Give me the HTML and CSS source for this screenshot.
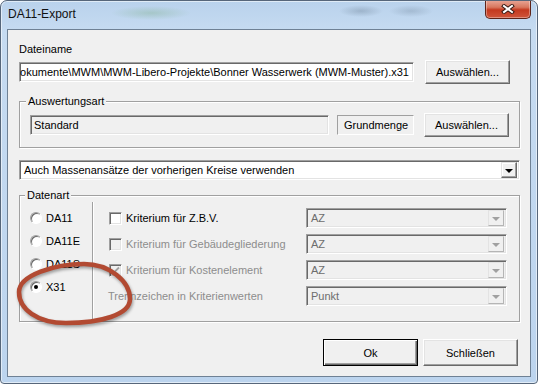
FILE: index.html
```html
<!DOCTYPE html>
<html lang="de">
<head>
  <meta charset="UTF-8">
  <title>DA11-Export</title>
  <link rel="stylesheet" href="styles.css">
</head>
<body>
  <div class="window">
    <div class="titlebar">
      <span class="title">DA11-Export</span>
      <button class="close-btn" title="Schließen">
        <svg width="14" height="10" viewBox="0 0 14 10">
          <path d="M3 2 L11 8 M11 2 L3 8" stroke="#3b1c16" stroke-width="4" stroke-linecap="square"/>
          <path d="M3 2 L11 8 M11 2 L3 8" stroke="#fff" stroke-width="2" stroke-linecap="square"/>
        </svg>
      </button>
    </div>
    <div class="client">
      <div class="label">Dateiname</div>
      <div class="file-row">
        <div class="field white path"><span>Dokumente\MWM\MWM-Libero-Projekte\Bonner Wasserwerk (MWM-Muster).x31</span></div>
        <button class="btn">Auswählen...</button>
      </div>

      <div class="group eval">
        <div class="legend">Auswertungsart</div>
        <div class="eval-row">
          <div class="field standard">Standard</div>
          <div class="field grund">Grundmenge</div>
          <button class="btn">Auswählen...</button>
        </div>
      </div>

      <div class="combo main-combo">
        <span class="combo-text">Auch Massenansätze der vorherigen Kreise verwenden</span>
        <span class="arrow"><i></i></span>
      </div>

      <div class="group datenart">
        <div class="legend">Datenart</div>
        <div class="datenart-body">
          <div class="radios">
            <label class="radio"><span class="dot"></span>DA11</label>
            <label class="radio"><span class="dot"></span>DA11E</label>
            <label class="radio"><span class="dot"></span>DA11S</label>
            <label class="radio"><span class="dot on"></span>X31</label>
          </div>
          <div class="criteria">
            <div class="crit">
              <span class="check"></span><span>Kriterium für Z.B.V.</span>
            </div>
            <div class="combo disabled"><span class="combo-text">AZ</span><span class="arrow"><i></i></span></div>

            <div class="crit off">
              <span class="check"></span><span>Kriterium für Gebäudegliederung</span>
            </div>
            <div class="combo disabled"><span class="combo-text">AZ</span><span class="arrow"><i></i></span></div>

            <div class="crit off">
              <span class="check checked">
                <svg width="9" height="9" viewBox="0 0 9 9"><path d="M1 4 L3 6.5 L8 1.5" stroke="#a0a0a0" stroke-width="1.8" fill="none"/></svg>
              </span><span>Kriterium für Kostenelement</span>
            </div>
            <div class="combo disabled"><span class="combo-text">AZ</span><span class="arrow"><i></i></span></div>

            <div class="crit off plain">
              <span>Trennzeichen in Kriterienwerten</span>
            </div>
            <div class="combo disabled"><span class="combo-text">Punkt</span><span class="arrow"><i></i></span></div>
          </div>
        </div>
      </div>

      <div class="actions">
        <button class="btn big default">Ok</button>
        <button class="btn big">Schließen</button>
      </div>

      <!-- rote Markierung um X31 -->
      <svg class="mark" width="200" height="320" viewBox="0 0 200 320">
        <path d="M11 262 C11 245 47 234 76 234 C101 234 122 251 122 269 C122 285 92 293 58 293 C29 293 11 279 11 262 Z"
              fill="none" stroke="#b24a32" stroke-width="4.5"/>
      </svg>
    </div>
  </div>
</body>
</html>
```

FILE: styles.css
```css
* { box-sizing: border-box; }
body { margin: 0; background: #fff; font-family: "Liberation Sans", Arial, sans-serif; font-size: 11px; color: #000; }
button { font-family: inherit; font-size: 11px; color: #000; padding: 0; cursor: default; }

/* Fensterrahmen (Aero) */
.window { width: 538px; height: 384px; display: flex; flex-direction: column; border: 1px solid #56667a; border-radius: 7px 7px 4px 4px; overflow: hidden;
  background:
    radial-gradient(ellipse 40px 7px at 150px 12px, rgba(120, 170, 130, .35), transparent),
    radial-gradient(ellipse 22px 6px at 360px 10px, rgba(60, 80, 100, .25), transparent),
    radial-gradient(ellipse 22px 6px at 410px 10px, rgba(60, 80, 100, .2), transparent),
    linear-gradient(to bottom, #b9d2ec 0, #c6dbf1 30px, #bcd4ee 100%);
  box-shadow: inset 0 0 0 1px rgba(255, 255, 255, .55); }
.titlebar { height: 28px; display: flex; justify-content: space-between; align-items: flex-start; padding: 0 6px 0 7px; }
.title { font-size: 12px; line-height: 27px; color: #111; }
.close-btn { width: 46px; height: 19px; margin-top: -1px; border: 1px solid #5e2419; border-top: none; border-radius: 0 0 5px 5px;
  background: linear-gradient(to bottom, #e9a899 0, #d8785f 40%, #c4391f 55%, #cf553a 100%);
  box-shadow: inset 0 0 0 1px rgba(255, 255, 255, .35); display: flex; align-items: center; justify-content: center; }

.client { flex: 1; margin: 0 6px 6px; border: 1px solid #6f8195; background: #f0f0f0; padding: 13px 10px 0 11px; position: relative; }

/* klassische Steuerelemente */
.btn { width: 85px; height: 24px; background: #f0f0f0; border: 1px solid; border-color: #fff #696969 #696969 #fff;
  box-shadow: inset -1px -1px 0 #a0a0a0, inset 1px 1px 0 #e3e3e3; }
.btn.big { width: 95px; height: 27px; }
.btn.default { border-color: #000; box-shadow: inset 1px 1px 0 #fff, inset -1px -1px 0 #696969, inset -2px -2px 0 #a0a0a0; }
.field { height: 20px; border: 1px solid; border-color: #a0a0a0 #fff #fff #a0a0a0; box-shadow: inset 1px 1px 0 #696969, inset -1px -1px 0 #e3e3e3;
  display: flex; align-items: center; padding: 0 3px; white-space: nowrap; overflow: hidden; }
.field.white { background: #fff; }

.label { height: 13px; line-height: 13px; }
.file-row { display: flex; align-items: center; gap: 11px; height: 24px; margin-top: 4px; width: 491px; }
.path { flex: 1; justify-content: flex-end; padding-right: 4px; }

.group { border: 1px solid #a0a0a0; box-shadow: inset 1px 1px 0 #fff, 1px 1px 0 #fff; }
.legend { display: table; margin: -7px 0 0 -4px; padding: 0 2px; line-height: 13px; background: #f0f0f0; }

.eval { margin-top: 17px; padding: 0 10px 10px; }
.eval-row { display: flex; align-items: center; height: 24px; margin-top: 5px; }
.standard { flex: 1; }
.grund { width: 77px; margin-left: 8px; padding-left: 6px; box-shadow: none; border-color: #a0a0a0 #fff #fff #a0a0a0; }
.eval-row .btn { margin-left: 10px; }

.combo { height: 20px; display: flex; align-items: center; border: 1px solid; border-color: #a0a0a0 #fff #fff #a0a0a0;
  box-shadow: inset 1px 1px 0 #696969, inset -1px -1px 0 #e3e3e3; background: #fff; padding: 2px; }
.combo-text { flex: 1; padding-left: 2px; white-space: nowrap; }
.arrow { width: 16px; height: 16px; background: #f0f0f0; border: 1px solid; border-color: #e3e3e3 #696969 #696969 #e3e3e3;
  box-shadow: inset -1px -1px 0 #a0a0a0, inset 1px 1px 0 #fff; display: flex; align-items: center; justify-content: center; }
.arrow i { width: 0; height: 0; border-left: 4px solid transparent; border-right: 4px solid transparent; border-top: 4px solid #000; margin-top: 1px; }
.main-combo { margin-top: 12px; }
.combo.disabled { background: #f0f0f0; color: #6d6d6d; }
.combo.disabled .arrow { border-color: #e3e3e3 #b5b5b5 #b5b5b5 #e3e3e3; box-shadow: none; }
.combo.disabled .arrow i { border-top-color: #a0a0a0; }

.datenart { margin-top: 15px; padding: 0; }
.datenart .legend { margin-left: 5px; }
.datenart-body { display: flex; height: 119px; }
.radios { width: 73px; border-right: 1px solid #a0a0a0; box-shadow: 1px 0 0 #fff; padding: 4px 0 0 10px; }
.radio { display: flex; align-items: center; height: 23px; gap: 4px; }
.dot { width: 12px; height: 12px; border-radius: 50%; background: #fff; border: 1px solid; border-color: #a0a0a0 #fff #fff #a0a0a0;
  box-shadow: inset 1px 1px 0 #696969; display: flex; align-items: center; justify-content: center; }
.dot.on::after { content: ""; width: 4px; height: 4px; border-radius: 50%; background: #000; }

.criteria { flex: 1; display: grid; grid-template-columns: 1fr 201px; grid-auto-rows: 20px; row-gap: 6px; padding: 6px 12px 0 16px; }
.crit { display: flex; align-items: center; gap: 4px; }
.crit.off { color: #8d8d8d; }
.crit.plain { margin-left: -1px; }
.check { width: 13px; height: 13px; background: #fff; border: 1px solid; border-color: #a0a0a0 #fff #fff #a0a0a0;
  box-shadow: inset 1px 1px 0 #696969, inset -1px -1px 0 #e3e3e3; display: flex; align-items: center; justify-content: center; }
.crit.off .check { background: #f0f0f0; }

.actions { display: flex; justify-content: flex-end; gap: 5px; margin: 17px 2px 0 0; }

.mark { position: absolute; left: 0; top: 0; pointer-events: none; filter: drop-shadow(1px 2px 1.5px rgba(0, 0, 0, .35)); }
```
